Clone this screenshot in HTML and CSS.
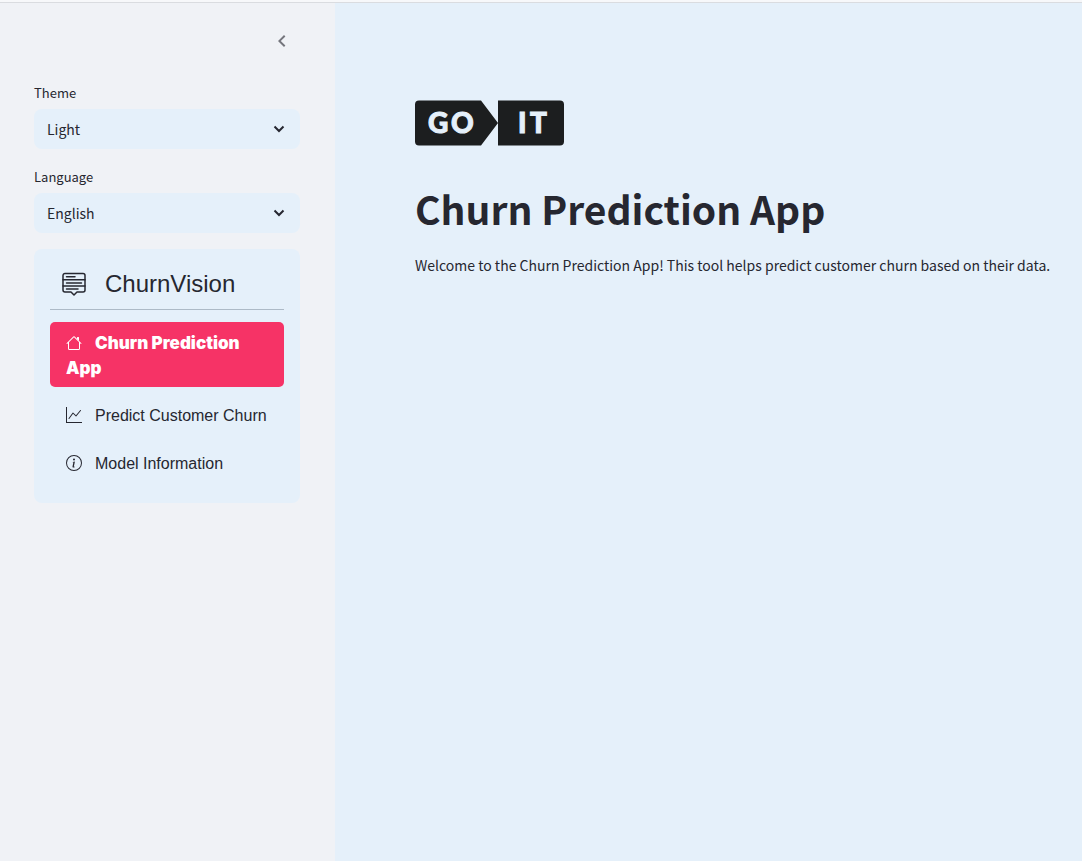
FILE: index.html
```html
<!DOCTYPE html>
<html lang="en">
<head>
<meta charset="utf-8">
<meta name="viewport" content="width=device-width, initial-scale=1">
<title>Churn Prediction App</title>
<link rel="stylesheet" href="styles.css">
</head>
<body>
<div class="top-line"></div>
<div class="app">
  <aside class="sidebar">
    <div class="sidebar-header">
      <button class="collapse" type="button" aria-label="Collapse sidebar">
        <svg width="24" height="24" viewBox="0 0 24 24" fill="currentColor" aria-hidden="true"><path d="M15.400 7.400 14 6l-6 6 6 6 1.400-1.400L10.800 12z"/></svg>
      </button>
    </div>
    <div class="field">
      <label class="field-label" for="theme">Theme</label>
      <div class="select-box">
        <select class="select" id="theme"><option>Light</option><option>Dark</option></select>
        <svg class="chevron" width="12" height="8" viewBox="0 0 12 8" aria-hidden="true"><path d="M1.500 1.500 6 6l4.500-4.500"/></svg>
      </div>
    </div>
    <div class="field">
      <label class="field-label" for="language">Language</label>
      <div class="select-box">
        <select class="select" id="language"><option>English</option></select>
        <svg class="chevron" width="12" height="8" viewBox="0 0 12 8" aria-hidden="true"><path d="M1.500 1.500 6 6l4.500-4.500"/></svg>
      </div>
    </div>
    <nav class="menu">
      <div class="menu-title">
        <svg width="24" height="24" viewBox="0 0 24 24" fill="none" stroke="currentColor" stroke-width="1.500" stroke-linecap="round" stroke-linejoin="round" aria-hidden="true">
          <path d="M3 1.500h18a2 2 0 0 1 2 2V18a2 2 0 0 1-2 2h-6l-3 3-3-3H3a2 2 0 0 1-2-2V3.500a2 2 0 0 1 2-2z"/>
          <path d="M4.500 4.700H13M1 7.700h22M4.500 10.900h15M1 14h22M4.500 17H16"/>
        </svg>
        <span>ChurnVision</span>
      </div>
      <a class="menu-item active" href="#home"><svg class="item-icon" width="16" height="16" viewBox="0 0 16 16" fill="currentColor" aria-hidden="true"><path fill-rule="evenodd" d="M2 13.500V7h1v6.500a.5.5 0 0 0 .5.500h9a.5.5 0 0 0 .5-.500V7h1v6.500a1.500 1.500 0 0 1-1.500 1.500h-9A1.500 1.500 0 0 1 2 13.500zm11-11V6l-2-2V2.500a.5.5 0 0 1 .5-.500h1a.5.5 0 0 1 .5.500z"/><path fill-rule="evenodd" d="M7.293 1.500a1 1 0 0 1 1.414 0l6.647 6.646a.5.5 0 0 1-.708.708L8 2.207 1.354 8.854a.5.5 0 1 1-.708-.708L7.293 1.500z"/></svg>Churn Prediction App</a>
      <a class="menu-item" href="#predict"><svg class="item-icon" width="16" height="16" viewBox="0 0 16 16" fill="currentColor" aria-hidden="true"><path fill-rule="evenodd" d="M0 0h1v15h15v1H0V0zm14.817 3.113a.5.5 0 0 1 .07.704l-4.500 5.500a.5.5 0 0 1-.74.037L7.060 6.767l-3.656 5.027a.5.5 0 0 1-.808-.588l4-5.500a.5.5 0 0 1 .758-.060l2.609 2.610 4.150-5.073a.5.5 0 0 1 .704-.070z"/></svg>Predict Customer Churn</a>
      <a class="menu-item" href="#model"><svg class="item-icon" width="16" height="16" viewBox="0 0 16 16" fill="currentColor" aria-hidden="true"><path d="M8 15A7 7 0 1 1 8 1a7 7 0 0 1 0 14zm0 1A8 8 0 1 0 8 0a8 8 0 0 0 0 16z"/><path d="m8.930 6.588-2.290.287-.082.380.450.083c.294.070.352.176.288.469l-.738 3.468c-.194.897.105 1.319.808 1.319.545 0 1.178-.252 1.465-.598l.088-.416c-.200.176-.492.246-.686.246-.275 0-.375-.193-.304-.533L8.930 6.588zM9 4.500a1 1 0 1 1-2 0 1 1 0 0 1 2 0z"/></svg>Model Information</a>
    </nav>
  </aside>
  <main class="main">
    <svg class="logo" width="149" height="46" viewBox="0 0 149 46" role="img" aria-label="GO IT">
      <path class="logo-plate" d="M4 0.500H66L83 23 66 45.500H4a4 4 0 0 1-4-4v-37a4 4 0 0 1 4-4zM83 0.500h62a4 4 0 0 1 4 4v37a4 4 0 0 1-4 4H83z"/>
      <text class="logo-text" y="33"><tspan x="13">G</tspan><tspan x="36">O</tspan></text>
      <text class="logo-text" y="33"><tspan x="103">I</tspan><tspan x="115">T</tspan></text>
    </svg>
    <h1 class="title">Churn Prediction App</h1>
    <p class="intro">Welcome to the Churn Prediction App! This tool helps predict customer churn based on their data.</p>
  </main>
</div>
</body>
</html>
```
FILE: styles.css
```css
* { box-sizing: border-box; }
body {
  display: flex;
  flex-direction: column;
  min-height: 100vh;
  margin: 0;
  color: #262730;
  background: #e5f0fa;
  font-family: "Noto Sans CJK SC", sans-serif;
  font-size: 14px;
}
.top-line {
  height: 3px;
  background: #f7f8fa;
  border-bottom: 1px solid #dadce0;
}
.app {
  display: flex;
  flex: 1;
}
.sidebar {
  flex: 0 0 335px;
  padding: 24px 35px 24px 34px;
  background: #f0f2f6;
}
.sidebar-header {
  display: flex;
  justify-content: flex-end;
  padding-right: 6px;
  margin-bottom: 26px;
}
.collapse {
  display: flex;
  padding: 2px 0;
  border: 0;
  background: none;
  color: #75767d;
}
.field { margin-bottom: 16px; }
.field-label {
  display: block;
  font-size: 13px;
  line-height: 24px;
}
.select-box {
  display: grid;
  align-items: center;
  margin-top: 4px;
}
.select {
  grid-area: 1 / 1;
  width: 100%;
  height: 40px;
  padding: 0 36px 0 13px;
  border: 0;
  border-radius: 8px;
  appearance: none;
  background: #e5f0fa;
  color: inherit;
  font: inherit;
}
.chevron {
  grid-area: 1 / 1;
  justify-self: end;
  margin-right: 15px;
  fill: none;
  stroke: #262730;
  stroke-width: 2;
  pointer-events: none;
}
.menu {
  padding: 16px 16px 12px;
  border-radius: 8px;
  background: #e5f0fa;
  font-family: "Liberation Sans", Arial, sans-serif;
  font-size: 16px;
}
.menu-title {
  display: flex;
  align-items: center;
  gap: 19px;
  height: 45px;
  padding: 0 12px 6px;
  margin-bottom: 12px;
  border-bottom: 1px solid #adbac7;
  font-size: 24px;
}
.menu-item {
  display: block;
  padding: 9px 16px 7px;
  margin-bottom: 8px;
  border-radius: 5px;
  color: inherit;
  line-height: 24px;
  text-decoration: none;
}
.menu-item.active {
  padding-bottom: 6px;
  background: #f63366;
  color: #fff;
  font-family: Inter, sans-serif;
  font-size: 17px;
  font-weight: 900;
  line-height: 25px;
}
.item-icon {
  margin-right: 13px;
  vertical-align: -2px;
}
.main {
  flex: 1;
  min-width: 0;
  padding: 97px 16px 24px 80px;
}
.logo { display: block; }
.logo-plate { fill: #1c1e1f; }
.logo-text {
  fill: #e5f0fa;
  stroke: #e5f0fa;
  stroke-width: 1;
  font-family: Lato, sans-serif;
  font-size: 28px;
  font-weight: 900;
}
.title {
  margin: 34px 0 17px;
  font-size: 39px;
  font-weight: 700;
  line-height: 56px;
}
.intro {
  margin: 0;
  line-height: 24px;
}
```
